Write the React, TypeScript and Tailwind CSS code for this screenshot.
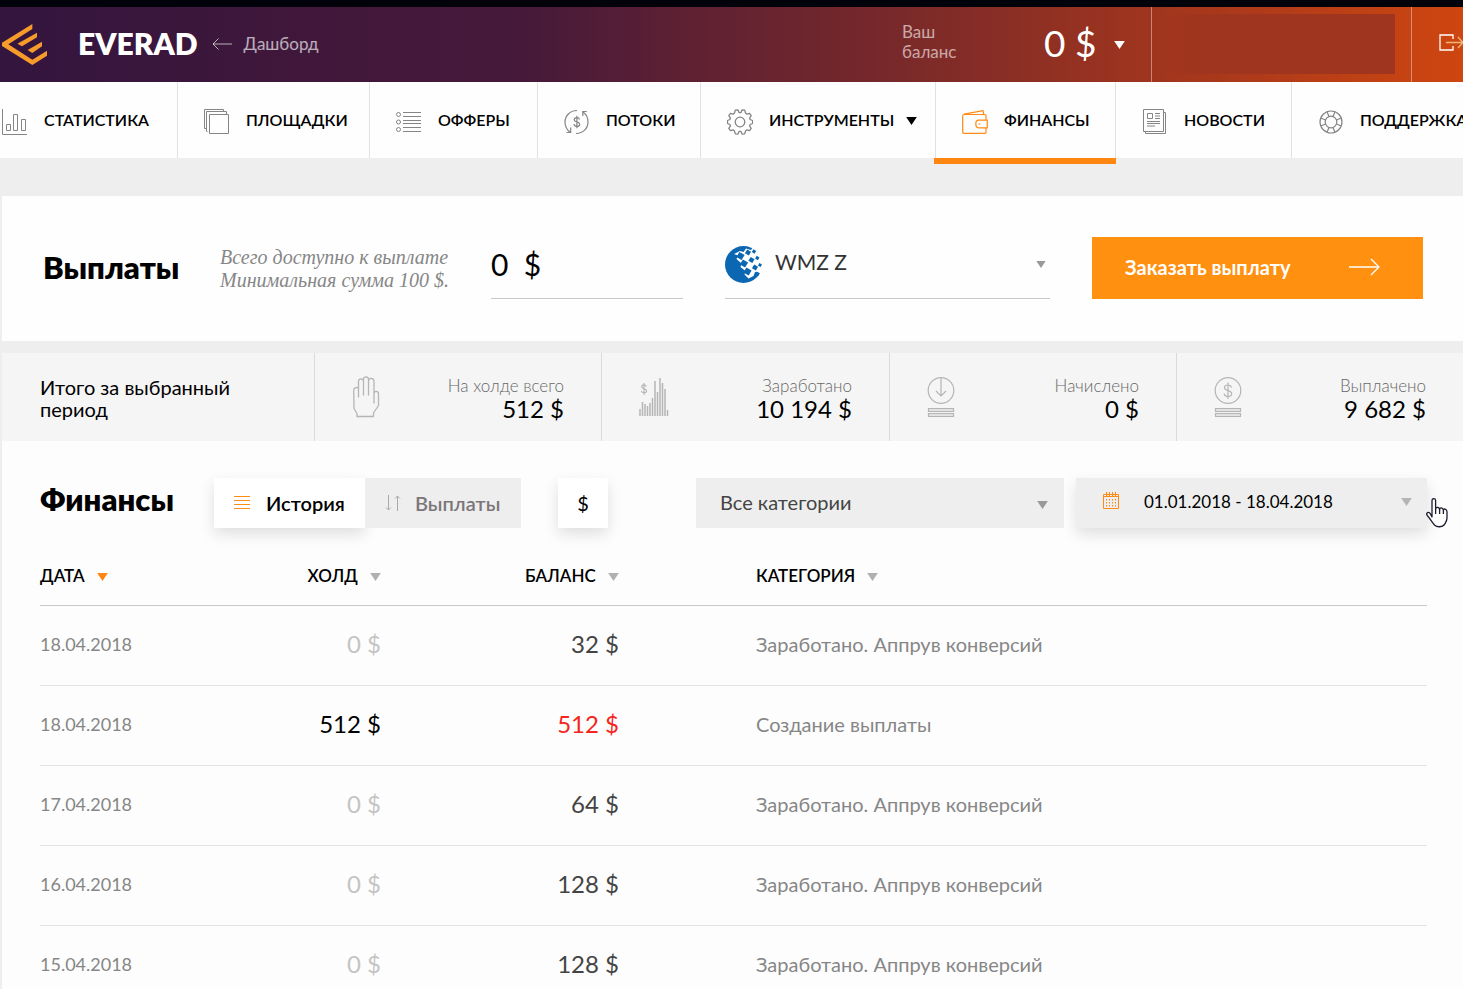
import React, { useState } from 'react';

type IconProps = { className?: string };

function Caret({ className = '' }: IconProps) {
  return (
    <svg className={className} viewBox="0 0 12 9" aria-hidden="true">
      <path d="M0 0h12L6 9z" fill="currentColor" />
    </svg>
  );
}

function Logo() {
  return (
    <svg className="h-[41px] w-[45px] shrink-0" viewBox="6 72 135 123" fill="#f79c2a" aria-hidden="true">
      <path d="M97 72v15L25 133l72 46 44-27v15l-44 28-91-57v-10z" />
      <path d="M111 98v14l-45 27-14-8z" />
      <path d="M126 125v14l-29 20-14-9z" />
    </svg>
  );
}

function StatsIcon() {
  return (
    <svg className="size-[26px] shrink-0" viewBox="0 0 26 26" fill="none" stroke="#858585" aria-hidden="true">
      <path d="M.5 0v25.500H25M4.500 15.500h4v6h-4zM11.500 5.500h4v16h-4zM19.500 10.500h4v11h-4z" />
    </svg>
  );
}

function PagesIcon() {
  return (
    <svg className="size-[26px] shrink-0" viewBox="0 0 26 26" fill="none" stroke="#858585" aria-hidden="true">
      <path d="M5.500 5.500h19v19h-19zM3.500 22.500h-1v-20h20v3M2.500 19.500h-2V.500h19v2" />
    </svg>
  );
}

function OffersIcon() {
  return (
    <svg className="size-[26px] shrink-0" viewBox="0 0 26 26" fill="none" stroke="#858585" aria-hidden="true">
      <circle cx="2.500" cy="5.500" r="2" />
      <circle cx="2.500" cy="13" r="2" />
      <circle cx="2.500" cy="20.500" r="2" />
      <path d="M7 3.500h18M7 7.500h18M7 11.500h18M7 14.500h18M7 18.500h18M7 22.500h18" />
    </svg>
  );
}

function FlowsIcon() {
  return (
    <svg className="size-[26px] shrink-0" viewBox="0 0 26 26" fill="none" stroke="#858585" strokeWidth="1.200" aria-hidden="true">
      <path d="M13 1.500C6 1.500 1 7 1 13c0 4 2 8 5.500 10.500M2.500 23.500h4.200v-5M12 24.500c7 0 12-5 12-11.500 0-4-1.500-7.500-5-10M22.800 2.500h-4v4.500" />
      <path d="M15.500 10.500c-.3-1.300-1.300-1.900-2.700-1.900-1.500 0-2.600.8-2.600 2.100 0 3 5.500 1.500 5.500 4.500 0 1.400-1.200 2.200-2.800 2.200s-2.700-.8-2.900-2.200M12.900 6.800v12.400" />
    </svg>
  );
}

function GearIcon() {
  return (
    <svg className="size-[26px] shrink-0" viewBox="0 0 26 26" fill="none" stroke="#858585" strokeWidth="1.300" strokeLinejoin="round" aria-hidden="true">
      <path d="M7.500 3.900 8.300 1.200 11 .900l1 2.700h2l1-2.700 2.700.300.800 2.700 1.500 1.300 2.500-.9 1.700 2.300-1.500 2.200.4 1.700 2.500 1v3l-2.500 1-.5 1.700 1.600 2.200-1.700 2.300-2.500-.9-1.500 1.300-.8 2.700-2.700.300-1-2.700h-2l-1 2.700-2.700-.300-.8-2.700L6 20.800l-2.500.9-1.700-2.300 1.600-2.200-.5-1.700-2.400-1v-3l2.400-1 .5-1.700-1.600-2.200 1.700-2.300 2.500.9z" />
      <circle cx="13" cy="13" r="4.800" />
    </svg>
  );
}

function WalletIcon() {
  return (
    <svg className="size-[26px] shrink-0" viewBox="0 0 26 26" fill="none" stroke="#ff8a14" strokeWidth="1.200" strokeLinejoin="round" aria-hidden="true">
      <path d="M24 11V6.500q0-1-1-1H2q-1.300 0-1.300 1.200v16.600q0 1 1 1H23q1 0 1-1V19M2 5.200 21 1.700l.8 3.600" />
      <path d="M25.300 11.200h-8.500q-3 0-3 3.600 0 4 3 4h8.500zM16.500 15h2" />
    </svg>
  );
}

function NewsIcon() {
  return (
    <svg className="size-[26px] shrink-0" viewBox="0 0 26 26" fill="none" stroke="#858585" aria-hidden="true">
      <path d="M1.500.500h20v22h-20zM21.500 3.500h2v21h-20v-2" />
      <path d="M5.500 4.500h5v5h-5zM13 4.500h5M13 7h5M13 9.500h5M5 12.500h13M5 14.500h13M5 17h8" />
    </svg>
  );
}

function SupportIcon() {
  return (
    <svg className="size-[26px] shrink-0" viewBox="0 0 26 26" fill="none" stroke="#858585" strokeWidth="1.200" aria-hidden="true">
      <circle cx="13" cy="13" r="11" />
      <circle cx="13" cy="13" r="5.800" />
      <path d="m9 2.700 2 4.700M17 2.700l-2 4.700M9 23.300l2-4.700M17 23.300l-2-4.700M2.700 9l4.900 2M2.700 17l4.900-2M23.300 9l-4.900 2M23.300 17l-4.900-2" />
    </svg>
  );
}

function HandIcon() {
  return (
    <svg className="h-11 w-[30px]" viewBox="0 0 30 44" fill="none" stroke="#b5b5b5" strokeWidth="1.300" strokeLinejoin="round" strokeLinecap="round" aria-hidden="true">
      <path d="M6.500 22V13c-2.500-1.200-4.800 0-4.800 2.500L2 33.500l3 5v3h16.500v-3.500l5-7.500V19c0-3.500-4.500-3.500-4.500 0v9M6.500 14V6.500c0-3.500 5-3.500 5 0V20M11.500 6V4.500c0-3.500 5-3.500 5 0V20M16.500 6c0-3.500 5.500-3.500 5.500.500V22" />
    </svg>
  );
}

function IncomeIcon() {
  const bars = [7, 14, 12, 10, 13, 18, 35, 24, 38, 33, 27, 6];
  return (
    <svg className="h-11 w-[30px]" viewBox="0 0 30 44" fill="none" stroke="#b5b5b5" strokeWidth="1.500" aria-hidden="true">
      {bars.map((h, i) => (
        <path key={i} d={`M${i * 2.5 + 1} ${41 - h}V41`} />
      ))}
      <path d="M7.300 11.500c-.3-1-1.100-1.600-2.300-1.600-1.400 0-2.300.8-2.300 1.900 0 2.500 4.900 1.400 4.900 4 0 1.300-1 2-2.500 2s-2.500-.8-2.700-2M5 8v12" strokeWidth="1.100" />
    </svg>
  );
}

function CoinIcon({ children }: { children: React.ReactNode }) {
  return (
    <svg className="h-11 w-[30px]" viewBox="0 0 30 44" fill="none" stroke="#b5b5b5" strokeWidth="1.200" aria-hidden="true">
      <circle cx="14" cy="15.500" r="12.800" />
      {children}
      <path d="M1.500 33.500h25v3h-25zM1.500 38.500h25v3h-25z" fill="#e2e2e2" />
    </svg>
  );
}

// center x, center y, size
const GLOBE_TILES = [
  [15.500, 10, 6], [19, 17.500, 6], [22.500, 25.500, 6],
  [23, 6.500, 4.500], [26.500, 14, 4.500], [30, 21.500, 4.500],
  [29, 5.500, 3.200], [32.300, 12, 3.200], [35, 19, 3], [32.300, 28, 3.500],
];

function WebMoneyLogo() {
  return (
    <svg className="size-[37px]" viewBox="0 0 37 37" aria-hidden="true">
      <circle cx="18.500" cy="18.500" r="18.500" fill="#0b67b2" />
      <path d="m9 8 6-3 3.500 1L21 2.500l5 1.500 2-2.500L38 6v22l-4-1-4-1-1.500 4-5 2.500-4-4 1-3.500-5-4 1-3.500-5-4.500 1.500-3.500z" fill="#fff" />
      <g fill="#0b67b2">
        {GLOBE_TILES.map(([x, y, s]) => (
          <rect key={`${x}-${y}`} x={x - s / 2} y={y - s / 2} width={s} height={s} transform={`rotate(30 ${x} ${y})`} />
        ))}
      </g>
    </svg>
  );
}

function ArrowRight({ className = '' }: IconProps) {
  return (
    <svg className={className} viewBox="0 0 32 18" fill="none" stroke="currentColor" strokeWidth="1.300" aria-hidden="true">
      <path d="M0 9h30M22 1l8 8-8 8" />
    </svg>
  );
}

const NAV = [
  { label: 'СТАТИСТИКА', icon: <StatsIcon /> },
  { label: 'ПЛОЩАДКИ', icon: <PagesIcon /> },
  { label: 'ОФФЕРЫ', icon: <OffersIcon /> },
  { label: 'ПОТОКИ', icon: <FlowsIcon /> },
  { label: 'ИНСТРУМЕНТЫ', icon: <GearIcon />, menu: true },
  { label: 'ФИНАНСЫ', icon: <WalletIcon />, active: true },
  { label: 'НОВОСТИ', icon: <NewsIcon /> },
  { label: 'ПОДДЕРЖКА', icon: <SupportIcon /> },
];

const TOTALS = [
  { label: 'На холде всего', value: '512 $', icon: <HandIcon /> },
  { label: 'Заработано', value: '10 194 $', icon: <IncomeIcon /> },
  { label: 'Начислено', value: '0 $', icon: <CoinIcon><path d="M14 3v18M9 16l5 5 5-5" /></CoinIcon> },
  {
    label: 'Выплачено',
    value: '9 682 $',
    icon: (
      <CoinIcon>
        <path d="M17.500 12.500c-.4-1.600-1.700-2.500-3.500-2.500-2 0-3.500 1-3.500 2.700 0 3.800 7.200 2 7.200 5.900 0 1.900-1.600 2.900-3.700 2.900-2.200 0-3.600-1.100-3.900-2.900M14 7.500V24" />
      </CoinIcon>
    ),
  },
];

const ROWS = [
  { date: '18.04.2018', hold: 0, balance: 32, category: 'Заработано. Аппрув конверсий' },
  { date: '18.04.2018', hold: 512, balance: 512, out: true, category: 'Создание выплаты' },
  { date: '17.04.2018', hold: 0, balance: 64, category: 'Заработано. Аппрув конверсий' },
  { date: '16.04.2018', hold: 0, balance: 128, category: 'Заработано. Аппрув конверсий' },
  { date: '15.04.2018', hold: 0, balance: 128, category: 'Заработано. Аппрув конверсий' },
];

function Header() {
  return (
    <header className="flex h-[82px] border-t-[7px] border-[#02020a] bg-linear-[90deg,#33153e_0%,#43183a_26%,#46193a_36%,#5e2133_47%,#76282b_60%,#a0351e_79%,#ce4610_100%] text-white">
      <div className="flex flex-1 items-center pb-1 pl-0.5">
        <span className="pt-1"><Logo /></span>
        <span className="ml-[31px] text-[30px] leading-9 font-extrabold">EVERAD</span>
        <a href="#dashboard" className="ml-3.5 flex items-center gap-3 pt-0.5 text-[17px] text-white/65">
          <svg className="h-3 w-5" viewBox="0 0 20 12" fill="none" stroke="currentColor" aria-hidden="true">
            <path d="M20 6H1M6.500.500 1 6l5.500 5.500" />
          </svg>
          Дашборд
        </a>
      </div>
      <div className="flex w-[249px] items-center pb-1.5">
        <div className="w-[142px] text-[17px] leading-5 text-white/60">Ваш<br />баланс</div>
        <button className="flex items-center gap-[18px] pt-0.5 text-[37px]">
          0 $
          <Caret className="mt-1 h-2 w-[11px]" />
        </button>
      </div>
      <div className="flex w-[260px] items-center border-l border-white/40 pr-4 pb-0.5 pl-2">
        <div className="h-[60px] flex-1 bg-linear-to-r from-[#9f351e]/0 to-[#9f351e] to-15%" />
      </div>
      <a href="#logout" aria-label="Выйти" className="flex w-[52px] items-center justify-end overflow-hidden border-l border-white/40 pb-1">
        <svg className="h-[18px] w-6" viewBox="0 0 24 18" fill="none" aria-hidden="true">
          <path d="M14 5V1H1v15h13v-4" stroke="#fff" strokeWidth="1.300" />
          <path d="M7 8.500h17M19 3l5 5.500-5 5.500" stroke="#f0b878" strokeWidth="1.300" />
        </svg>
      </a>
    </header>
  );
}

function Nav() {
  return (
    <nav className="grid h-[76px] grid-cols-[minmax(0,177fr)_minmax(0,192fr)_minmax(0,168fr)_minmax(0,163fr)_minmax(0,235fr)_minmax(0,180fr)_minmax(0,176fr)_minmax(0,172fr)] bg-[#fefefe]">
      {NAV.map((item, i) => (
        <a
          key={item.label}
          href="#"
          className={`relative flex items-center gap-4 text-base font-semibold whitespace-nowrap ${i === 0 ? 'pl-0.5' : 'border-l border-[#e2e2e2] pl-[26px]'}`}
        >
          <span className="mt-1">{item.icon}</span>
          {item.label}
          {item.menu && <Caret className="mt-0.5 -ml-1 h-2 w-[11px]" />}
          {item.active && <span className="absolute top-full -right-px -left-0.5 h-1.5 bg-[#ff8610]" />}
        </a>
      ))}
    </nav>
  );
}

function Payout() {
  return (
    <section className="flex h-[145px] items-center gap-[42px] bg-[#fefefe] pr-10 pb-0.5 pl-[41px]">
      <h1 className="w-[135px] text-[31px] font-extrabold">Выплаты</h1>
      <p className="w-[229px] pt-0.5 font-['Liberation_Serif',serif] text-[20px] leading-[23px] whitespace-nowrap text-[#868686] italic">
        Всего доступно к выплате<br />Минимальная сумма 100 $.
      </p>
      <input
        aria-label="Сумма выплаты"
        defaultValue="0  $"
        className="h-[62px] w-48 border-b border-[#c8c8c8] bg-transparent pb-1.5 text-3xl outline-none"
      />
      <div className="relative flex-1">
        <span className="pointer-events-none absolute top-[9px] left-0"><WebMoneyLogo /></span>
        <select aria-label="Кошелёк" className="h-[62px] w-full appearance-none border-b border-[#c8c8c8] bg-transparent pb-2.5 pl-[50px] text-[21px] text-[#333] outline-none">
          <option>WMZ Z</option>
        </select>
        <Caret className="pointer-events-none absolute top-6 right-[3px] h-[7px] w-3 text-[#999]" />
      </div>
      <button className="flex h-[62px] w-[331px] items-center justify-between bg-[#ff9010] pr-[42px] pb-0.5 pl-[33px] text-[20px] font-bold text-white">
        Заказать выплату
        <ArrowRight className="h-[18px] w-8" />
      </button>
    </section>
  );
}

function Totals() {
  return (
    <section className="mt-3 grid h-[88px] grid-cols-[312fr_287fr_288fr_287fr_287fr] bg-[#f5f5f5]">
      <h2 className="flex items-center pt-0.5 pr-16 pl-[38px] text-xl leading-[22px]">Итого за выбранный период</h2>
      {TOTALS.map(t => (
        <div key={t.label} className="flex items-center justify-between border-l border-[#dadada] px-[37px]">
          {t.icon}
          <div className="pt-0.5 text-right">
            <div className="text-[17px] leading-[22px] font-light text-[#686868]">{t.label}</div>
            <div className="text-2xl leading-6">{t.value}</div>
          </div>
        </div>
      ))}
    </section>
  );
}

function Toolbar({ tab, onTab }: { tab: string; onTab: (t: string) => void }) {
  return (
    <div className="flex h-[50px] items-center">
      <h2 className="-mt-2 w-[174px] text-[31px] font-extrabold">Финансы</h2>
      <button
        onClick={() => onTab('history')}
        className={`flex h-full w-[151px] items-center gap-4 pl-5 text-[20px] font-semibold ${tab === 'history' ? 'bg-white shadow-[0_6px_14px_rgba(0,0,0,0.12)]' : 'bg-[#eee] text-[#7b7679]'}`}
      >
        <svg className="h-3.5 w-4" viewBox="0 0 16 14" stroke="#ff8a14" aria-hidden="true">
          <path d="M0 .500h16M0 4.500h16M0 8.500h16M0 12.500h16" />
        </svg>
        История
      </button>
      <button
        onClick={() => onTab('payouts')}
        className={`flex h-full w-[156px] items-center gap-3.5 pl-5 text-[20px] font-semibold ${tab === 'payouts' ? 'bg-white shadow-[0_6px_14px_rgba(0,0,0,0.12)]' : 'bg-[#eee] text-[#7b7679]'}`}
      >
        <svg className="h-4 w-4" viewBox="0 0 16 16" fill="none" stroke="#aaa" aria-hidden="true">
          <path d="M3.500 0v15M1 12.500 3.500 15 6 12.500M12.500 16V1M10 3.500 12.500 1 15 3.500" />
        </svg>
        Выплаты
      </button>
      <button className="ml-[37px] h-full w-[50px] bg-white text-xl shadow-[0_6px_14px_rgba(0,0,0,0.12)]">$</button>
      <div className="relative ml-[88px] h-full flex-1">
        <select aria-label="Категория" className="h-full w-full appearance-none bg-[#eee] px-6 pb-0.5 text-[20px] text-[#444] outline-none">
          <option>Все категории</option>
        </select>
        <Caret className="pointer-events-none absolute top-[23px] right-4 h-2 w-[11px] text-[#999]" />
      </div>
      <button className="relative ml-3 flex h-full w-[351px] items-center bg-[#eee] px-[27px] pb-0.5 text-[17px] shadow-[0_6px_14px_rgba(0,0,0,0.12)]">
        <svg className="-mt-1 mr-[25px] h-[17px] w-4" viewBox="0 0 16 17" fill="none" stroke="#ff8a14" aria-hidden="true">
          <path d="M.500 2.500h15v14H.500zM.500 4.500h15M3.500 0v4M6.500 0v4M9.500 0v4M12.500 0v4" />
          <path d="M3.500 7v8M6.500 7v8M9.500 7v8M12.500 7v8" strokeDasharray="1.500 1.500" />
        </svg>
        01.01.2018 - 18.04.2018
        <Caret className="-mr-3 ml-auto h-2 w-[11px] text-[#b5b5b5]" />
        {/* hand pointer hovering the date picker */}
        <svg className="absolute top-5 -right-[21px] h-[30px] w-[22px]" viewBox="0 0 22 30" fill="#fff" stroke="#1c1c2c" strokeWidth="1.300" strokeLinejoin="round" aria-hidden="true">
          <path d="M6 19V2.500c0-2.400 3.600-2.400 3.600 0V12c0-4 4-3 4 0 0-3.500 3.800-2.500 3.800.800 0-3 3.600-2 3.600 1V20c0 3-1.500 4.500-2.500 6.500-2 2.800-7.500 3-10 .5C6 24 4 20.500 1.300 17.500c-1.600-2 .5-4 2.500-2.500z" />
          <path d="M9.600 12v4M13.600 12v4M17.400 13v3" fill="none" />
        </svg>
      </button>
    </div>
  );
}

function HistoryTable() {
  return (
    <table className="mt-[18px] w-full table-fixed border-collapse">
      <thead>
        <tr className="h-[59px] border-b border-[#c8c8c8] text-[17px]">
          <th className="w-[170px] text-left font-semibold">ДАТА <Caret className="ml-2 inline h-2 w-[11px] text-[#ff8610]" /></th>
          <th className="w-[171px] text-right font-semibold">ХОЛД <Caret className="ml-2 inline h-2 w-[11px] text-[#b0b0b0]" /></th>
          <th className="w-[238px] text-right font-semibold">БАЛАНС <Caret className="ml-2 inline h-2 w-[11px] text-[#b0b0b0]" /></th>
          <th className="pl-[137px] text-left font-semibold">КАТЕГОРИЯ <Caret className="ml-2 inline h-2 w-[11px] text-[#b0b0b0]" /></th>
        </tr>
      </thead>
      <tbody>
        {ROWS.map((row, i) => (
          <tr key={i} className="h-20 border-b border-[#e2e2e2]">
            <td className="pb-0.5 text-lg text-[#868686]">{row.date}</td>
            <td className={`pb-0.5 text-right text-2xl ${row.hold ? 'text-black' : 'text-[#c4c4c4]'}`}>{row.hold} $</td>
            <td className={`pb-0.5 text-right text-2xl ${row.out ? 'text-[#f5241c]' : 'text-[#444]'}`}>{row.balance} $</td>
            <td className="pb-0.5 pl-[137px] text-[20px] text-[#868686]">{row.category}</td>
          </tr>
        ))}
      </tbody>
    </table>
  );
}

export default function App() {
  const [tab, setTab] = useState('history');

  return (
    <div className="h-screen overflow-hidden bg-[#eee] font-[Lato,sans-serif] text-black">
      <Header />
      <Nav />
      <main className="mt-[38px] pl-0.5">
        <Payout />
        <Totals />
        <section className="bg-[#fdfdfd] pt-[37px] pr-9 pl-[38px]">
          <Toolbar tab={tab} onTab={setTab} />
          <HistoryTable />
        </section>
      </main>
    </div>
  );
}
